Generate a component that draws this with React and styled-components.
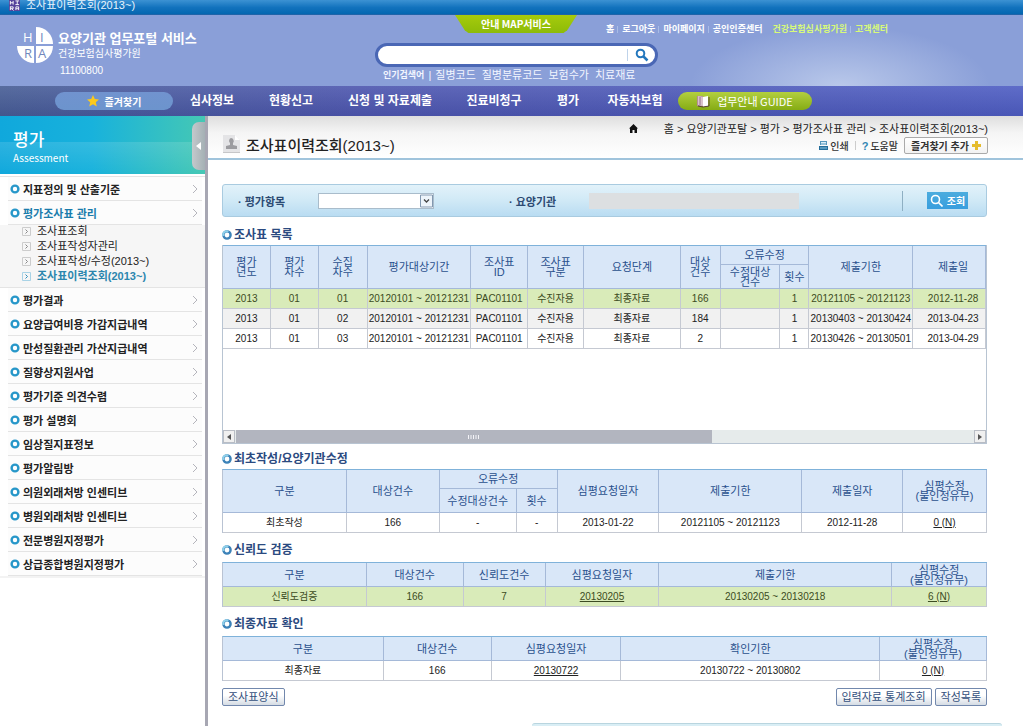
import React from "react";
import styled, { createGlobalStyle } from "styled-components";

const menuTop = ["지표정의 및 산출기준"];
const subMenu = ["조사표조회", "조사표작성자관리", "조사표작성/수정(2013~)", "조사표이력조회(2013~)"];
const menuRest = [
  "평가결과",
  "요양급여비용 가감지급내역",
  "만성질환관리 가산지급내역",
  "질향상지원사업",
  "평가기준 의견수렴",
  "평가 설명회",
  "임상질지표정보",
  "평가알림방",
  "의원외래처방 인센티브",
  "병원외래처방 인센티브",
  "전문병원지정평가",
  "상급종합병원지정평가"
];

const navItems = [
  { label: "심사정보", width: 78 },
  { label: "현황신고", width: 80 },
  { label: "신청 및 자료제출", width: 118 },
  { label: "진료비청구", width: 90 },
  { label: "평가", width: 58 },
  { label: "자동차보험", width: 76 }
];

const surveyRows = [
  ["2013", "01", "01", "20120101 ~ 20121231", "PAC01101", "수진자용", "최종자료", "166", "", "1", "20121105 ~ 20121123", "2012-11-28"],
  ["2013", "01", "02", "20120101 ~ 20121231", "PAC01101", "수진자용", "최종자료", "184", "", "1", "20130403 ~ 20130424", "2013-04-23"],
  ["2013", "01", "03", "20120101 ~ 20121231", "PAC01101", "수진자용", "최종자료", "2", "", "1", "20130426 ~ 20130501", "2013-04-29"]
];

const Columns = ({ widths }) => {
  const total = widths.reduce((sum, width) => sum + width, 0);
  return (
    <colgroup>
      { widths.map((width, i) => <Col key={ i } $share={ width / total * 100 } />) }
    </colgroup>
  );
};

const Ring = () => (
  <RingIcon viewBox="0 0 10 10">
    <circle cx="5" cy="5" r="3.4" fill="#fff" stroke="#2797c9" strokeWidth="2.4" />
  </RingIcon>
);

const Section = ({ children, space }) => (
  <SectionTitle $space={ space }>
    <RingIcon viewBox="0 0 10 10">
      <circle cx="5" cy="5" r="3.6" fill="#fff" stroke="#3c82b8" strokeWidth="2.4" />
      <path d="M1.4 6a3.6 3.6 0 0 1 5-4.4" fill="none" stroke="#8ed0ea" strokeWidth="2" />
    </RingIcon>
    { children }
  </SectionTitle>
);

const MenuEntry = ({ label, active }) => (
  <MenuLink href="#" $active={ active }>
    <Ring />
    <span>{ label }</span>
    <Chevron viewBox="0 0 6 10"><path d="M1 1l4 4-4 4" /></Chevron>
  </MenuLink>
);

const Logo = () => (
  <LogoMark viewBox="0 0 38 38">
    <path d="M20 18V1a17 17 0 0 1 17 17z" fill="#fff" />
    <path d="M18 20v17A17 17 0 0 1 1 20z" fill="#fff" />
    <path d="M20 20h17a17 17 0 0 1-17 17z" fill="#fff" />
    <text x="7" y="16" fill="#fff">H</text>
    <text x="24" y="16" fill="#7288bd">I</text>
    <text x="8" y="32" fill="#7288bd">R</text>
    <text x="22" y="32" fill="#7288bd">A</text>
  </LogoMark>
);

const App = () => (
  <Page>
    <GlobalStyle />
    <TitleBar>
      <Favicon viewBox="0 0 12 12">
        <rect width="12" height="12" fill="#54429a" />
        <path d="M1.5 1v4M4.5 1v4M1.5 3h3M7 1h4M9 1v4M7 5h4M1.5 7v4M1.5 7.5h3v2h-3M3 9.5l2 2M7.5 11V7.5h3V11M7.5 9.5h3" stroke="#fff" fill="none" />
      </Favicon>
      조사표이력조회(2013~)
    </TitleBar>
    <Header>
      <Brand>
        <Logo />
        <BrandText>
          <BrandName>요양기관 업무포털 서비스</BrandName>
          <BrandOrg>건강보험심사평가원</BrandOrg>
          <BrandCode>11100800</BrandCode>
        </BrandText>
      </Brand>
      <HeaderMain>
        <TopRow>
          <MapButton>안내 MAP서비스</MapButton>
          <TopLinks>
            <TopLink href="#">홈</TopLink>
            <TopLink href="#">로그아웃</TopLink>
            <TopLink href="#">마이페이지</TopLink>
            <TopLink href="#">공인인증센터</TopLink>
          </TopLinks>
          <TopLinks>
            <TopLink href="#" $green>건강보험심사평가원</TopLink>
            <TopLink href="#" $green>고객센터</TopLink>
          </TopLinks>
        </TopRow>
        <SearchBox>
          <SearchInput aria-label="통합검색" />
          <SearchButton aria-label="검색">
            <svg width="14" height="14" viewBox="0 0 14 14" fill="none" stroke="#2377bd" strokeWidth="2">
              <circle cx="5.5" cy="5.5" r="3.8" />
              <path d="M8.5 8.5l4 4" strokeWidth="2.5" />
            </svg>
          </SearchButton>
        </SearchBox>
        <Keywords>
          <b>인기검색어</b>
          <span>|</span>
          <a href="#">질병코드</a>
          <a href="#">질병분류코드</a>
          <a href="#">보험수가</a>
          <a href="#">치료재료</a>
        </Keywords>
      </HeaderMain>
    </Header>
    <Nav>
      <FavoriteButton>
        <svg width="12" height="12" viewBox="0 0 12 12">
          <path d="M6 0l1.8 4 4.2.4-3.2 2.8 1 4.4L6 9.3l-3.8 2.3 1-4.4L0 4.4 4.2 4z" fill="#fbc91c" />
        </svg>
        즐겨찾기
      </FavoriteButton>
      { navItems.map(item => <NavItem key={ item.label } href="#" $width={ item.width }>{ item.label }</NavItem>) }
      <GuideButton>
        <svg width="13" height="13" viewBox="0 0 13 13">
          <path d="M0 1h6v10H0z" fill="#b58c98" />
          <path d="M1 1l5 1v9l-5-1z" fill="#d9c3cb" />
          <path d="M6 2l5-1v10l-5 1z" fill="#fff" />
          <path d="M1 11l5 1 6-1V2" stroke="#583f38" fill="none" />
          <path d="M3 2v8" stroke="#96758c" />
        </svg>
        업무안내 GUIDE
      </GuideButton>
    </Nav>
    <Body>
      <Sidebar>
        <SideHead>
          <div>
            <SideTitle>평가</SideTitle>
            <SideSub>Assessment</SideSub>
          </div>
          <CollapseButton aria-label="메뉴 닫기">
            <svg width="5" height="8" viewBox="0 0 5 8"><path d="M5 0v8L0 4z" fill="#fff" /></svg>
          </CollapseButton>
        </SideHead>
        <Menu>
          { menuTop.map(label => <MenuEntry key={ label } label={ label } />) }
          <MenuEntry label="평가조사표 관리" active />
          <SubMenu>
            { subMenu.map((label, i) => (
              <SubLink key={ label } href="#" $active={ i === 3 }>
                <svg width="9" height="9" viewBox="0 0 9 9" fill="none">
                  <path d="M.5.5h8v8h-8z" stroke={ i === 3 ? "#a9d3e6" : "#ccc" } />
                  <path d="M3.5 2.5l2 2-2 2" stroke={ i === 3 ? "#2f8fbc" : "#888" } />
                </svg>
                { label }
              </SubLink>
            )) }
          </SubMenu>
          { menuRest.map(label => <MenuEntry key={ label } label={ label } />) }
        </Menu>
      </Sidebar>
      <Main>
        <PageHead>
          <PageTitle>
            <svg width="19" height="20" viewBox="0 0 19 20">
              <path d="M1 1h12l5 5v13H1z" fill="#e4e4e6" />
              <path d="M13 1v5h5z" fill="#fff" />
              <path d="M1 18.5h17" stroke="#c6c6c8" />
              <path d="M9 4a3 3 0 0 1 2 5v2l4 1v3H4v-3l4-1V9a3 3 0 0 1 1-5z" fill="#9c9ca0" />
            </svg>
            조사표이력조회(2013~)
          </PageTitle>
          <PageTools>
            <Crumbs>
              <svg width="9" height="9" viewBox="0 0 9 9"><path d="M4.5 0L9 4.5H8V9H5.5V6h-2v3H1V4.5H0z" fill="#111" /></svg>
              <span>홈 &gt; 요양기관포탈 &gt; 평가 &gt; 평가조사표 관리 &gt; 조사표이력조회(2013~)</span>
            </Crumbs>
            <ToolRow>
              <ToolLink href="#">
                <svg width="9" height="9" viewBox="0 0 9 9">
                  <path d="M1 0h7v4H1z" fill="#5596bc" />
                  <path d="M2 1.5h5M2 3h5" stroke="#d9edf8" />
                  <path d="M0 5h9v4H0z" fill="#246e9c" />
                  <path d="M1 7h7" stroke="#8ac5e3" />
                </svg>
                인쇄
              </ToolLink>
              <ToolDivider />
              <ToolLink href="#"><Question>?</Question>도움말</ToolLink>
              <AddFavorite>
                즐겨찾기 추가
                <svg width="9" height="9" viewBox="0 0 9 9"><path d="M3 0h3v3h3v3H6v3H3V6H0V3h3z" fill="#e5bc2d" /></svg>
              </AddFavorite>
            </ToolRow>
          </PageTools>
        </PageHead>
        <Content>
          <Filter>
            <FilterLabel htmlFor="item">· 평가항목</FilterLabel>
            <SelectWrap>
              <Select id="item"><option></option></Select>
              <SelectArrow viewBox="0 0 13 13">
                <path d="M.5.5h12v12H.5z" fill="#edf4fa" stroke="#8298b0" />
                <path d="M4 5l2.5 2.5L9 5" fill="none" stroke="#444" strokeWidth="1.3" />
              </SelectArrow>
            </SelectWrap>
            <FilterLabel htmlFor="org" $indent>· 요양기관</FilterLabel>
            <OrgInput id="org" disabled />
            <FilterDivider />
            <QueryButton>
              <svg width="13" height="13" viewBox="0 0 13 13" fill="none" stroke="#fff" strokeWidth="1.6">
                <circle cx="5.5" cy="5.5" r="4" />
                <path d="M8.5 8.5l4 4" />
              </svg>
              조회
            </QueryButton>
          </Filter>

          <Section space={ 8 }>조사표 목록</Section>
          <GridPanel>
            <Table $flush>
              <Columns widths={ [48, 48, 49, 104, 57, 56, 97, 40, 60, 29, 104, 73] } />
              <thead>
                <tr>
                  <Th rowSpan="2">평가<br />년도</Th>
                  <Th rowSpan="2">평가<br />차수</Th>
                  <Th rowSpan="2">수집<br />차수</Th>
                  <Th rowSpan="2">평가대상기간</Th>
                  <Th rowSpan="2">조사표<br />ID</Th>
                  <Th rowSpan="2">조사표<br />구분</Th>
                  <Th rowSpan="2">요청단계</Th>
                  <Th rowSpan="2">대상<br />건수</Th>
                  <Th colSpan="2" $height={ 19 }>오류수정</Th>
                  <Th rowSpan="2">제출기한</Th>
                  <Th rowSpan="2" $cut>제출일</Th>
                </tr>
                <tr>
                  <Th $height={ 24 }>수정대상<br />건수</Th>
                  <Th>횟수</Th>
                </tr>
              </thead>
              <tbody>
                { surveyRows.map((row, i) => (
                  <Row key={ i } $tone={ ["green", "grey"][i] }>
                    { row.map((cell, j) => <Td key={ j } $cut={ j === 11 }>{ cell }</Td>) }
                  </Row>
                )) }
              </tbody>
            </Table>
            <ScrollBar>
              <ScrollButton aria-label="왼쪽"><svg width="4" height="6" viewBox="0 0 4 6"><path d="M4 0v6L0 3z" fill="#555" /></svg></ScrollButton>
              <ScrollTrack>
                <ScrollThumb>
                  <svg width="12" height="4" viewBox="0 0 12 4"><path d="M.5 0v4M3 0v4M5.5 0v4M8 0v4M10.5 0v4" stroke="#f4f4f8" /></svg>
                </ScrollThumb>
              </ScrollTrack>
              <ScrollButton aria-label="오른쪽"><svg width="4" height="6" viewBox="0 0 4 6"><path d="M0 0v6l4-3z" fill="#555" /></svg></ScrollButton>
            </ScrollBar>
          </GridPanel>

          <Section space={ 5 }>최초작성/요양기관수정</Section>
          <Table>
            <Columns widths={ [124, 93, 77, 41, 102, 143, 101, 84] } />
            <thead>
              <tr>
                <Th rowSpan="2">구분</Th>
                <Th rowSpan="2">대상건수</Th>
                <Th colSpan="2" $height={ 19 }>오류수정</Th>
                <Th rowSpan="2">심평요청일자</Th>
                <Th rowSpan="2">제출기한</Th>
                <Th rowSpan="2">제출일자</Th>
                <Th rowSpan="2">심평수정<br />(불인정유무)</Th>
              </tr>
              <tr>
                <Th $height={ 24 }>수정대상건수</Th>
                <Th>횟수</Th>
              </tr>
            </thead>
            <tbody>
              <Row>
                <Td>최초작성</Td>
                <Td>166</Td>
                <Td>-</Td>
                <Td>-</Td>
                <Td>2013-01-22</Td>
                <Td>20121105 ~ 20121123</Td>
                <Td>2012-11-28</Td>
                <Td><a href="#">0 (N)</a></Td>
              </Row>
            </tbody>
          </Table>

          <Section space={ 7 }>신뢰도 검증</Section>
          <Table>
            <Columns widths={ [144, 97, 82, 114, 233, 95] } />
            <thead>
              <tr>
                <Th $height={ 24 }>구분</Th>
                <Th>대상건수</Th>
                <Th>신뢰도건수</Th>
                <Th>심평요청일자</Th>
                <Th>제출기한</Th>
                <Th>심평수정<br />(불인정유무)</Th>
              </tr>
            </thead>
            <tbody>
              <Row $tone="green">
                <Td>신뢰도검증</Td>
                <Td>166</Td>
                <Td>7</Td>
                <Td><DateLink href="#">20130205</DateLink></Td>
                <Td>20130205 ~ 20130218</Td>
                <Td><a href="#">6 (N)</a></Td>
              </Row>
            </tbody>
          </Table>

          <Section space={ 7 }>최종자료 확인</Section>
          <Table>
            <Columns widths={ [161, 108, 130, 259, 107] } />
            <thead>
              <tr>
                <Th $height={ 24 }>구분</Th>
                <Th>대상건수</Th>
                <Th>심평요청일자</Th>
                <Th>확인기한</Th>
                <Th>심평수정<br />(불인정유무)</Th>
              </tr>
            </thead>
            <tbody>
              <Row>
                <Td>최종자료</Td>
                <Td>166</Td>
                <Td><DateLink href="#">20130722</DateLink></Td>
                <Td>20130722 ~ 20130802</Td>
                <Td><a href="#">0 (N)</a></Td>
              </Row>
            </tbody>
          </Table>

          <Actions>
            <ActionButton>조사표양식</ActionButton>
            <ActionGroup>
              <ActionButton>입력자료 통계조회</ActionButton>
              <ActionButton>작성목록</ActionButton>
            </ActionGroup>
          </Actions>
        </Content>
        <FootStrip />
      </Main>
    </Body>
  </Page>
);

export default App;


const GlobalStyle = createGlobalStyle`
  * {
    box-sizing: border-box;
  }

  body {
    margin: 0;
    background: #fff;
  }

  body, button, input, select {
    font-family: "Liberation Sans", "Noto Sans CJK KR", sans-serif;
    font-size: 11px;
  }

  a {
    color: inherit;
  }

  button {
    padding: 0;
    border: 0;
    white-space: nowrap;
  }

  svg {
    flex: none;
  }
`;

const Page = styled.div`
  display: flex;
  flex-direction: column;
  min-height: 100vh;
`;

const TitleBar = styled.div`
  display: flex;
  align-items: center;
  gap: 6px;
  height: 15px;
  padding: 0 0 4px 9px;
  color: #e9f4fc;
  font-size: 11px;
  line-height: 11px;
  background: linear-gradient(#3c92d3, #1272bd 50%, #0567b1 90%, #2c62a4);
`;

const Favicon = styled.svg`
  width: 11px;
  height: 11px;
`;

const Header = styled.header`
  display: flex;
  height: 71px;
  background: radial-gradient(ellipse 150px 60px at 840px 100%, #b9c8ea, rgba(138, 159, 216, 0)), #8a9fd8;
`;

const Brand = styled.div`
  display: flex;
  flex: none;
  gap: 4px;
  width: 375px;
  padding: 11px 0 0 16px;
  color: #fff;
`;

const LogoMark = styled.svg`
  width: 38px;
  height: 38px;
  font-family: "Open Sans", sans-serif;
  font-size: 13px;
`;

const BrandText = styled.div`
  display: flex;
  flex-direction: column;
`;

const BrandName = styled.strong`
  padding-top: 4px;
  font-size: 13px;
  line-height: 18px;
`;

const BrandOrg = styled.span`
  font-size: 10px;
  line-height: 12px;
`;

const BrandCode = styled.span`
  margin-top: 4px;
  padding-left: 2px;
  font-size: 10px;
  line-height: 14px;
`;

const HeaderMain = styled.div`
  flex: 1;
`;

const TopRow = styled.div`
  display: flex;
  height: 28px;
  padding-left: 80px;
`;

const MapButton = styled.button`
  width: 122px;
  height: 18px;
  margin-right: 29px;
  color: #fff;
  font-family: "Noto Sans CJK KR", sans-serif;
  font-size: 10px;
  font-weight: bold;
  line-height: 18px;
  background: linear-gradient(#a6cb0c, #8dbb08);
  clip-path: polygon(0 0, 100% 0, 92% 85%, 89% 100%, 11% 100%, 8% 85%);
`;

const TopLinks = styled.div`
  display: flex;
  gap: 8px;
  height: 27px;
  margin-right: 10px;
  align-items: center;
`;

const TopLink = styled.a`
  position: relative;
  color: ${props => props.$green ? "#d8fa79" : "#fff"};
  font-size: 9px;
  font-weight: bold;
  line-height: 12px;
  text-decoration: none;
  white-space: nowrap;

  & + &::before {
    content: "";
    position: absolute;
    top: 3px;
    left: -5px;
    height: 7px;
    border-left: 1px solid #a9bce6;
  }
`;

const SearchBox = styled.div`
  display: flex;
  align-items: center;
  width: 283px;
  height: 24px;
  border: 3px solid #4a67b5;
  border-radius: 12px;
  background: #fff;
`;

const SearchInput = styled.input`
  flex: 1;
  min-width: 0;
  height: 14px;
  margin-left: 10px;
  border: 0;
  outline: 0;
  background: none;
`;

const SearchButton = styled.button`
  display: flex;
  align-items: center;
  justify-content: center;
  width: 28px;
  height: 12px;
  border-left: 1px solid #bfd3ea;
  background: none;
`;

const Keywords = styled.div`
  display: flex;
  gap: 6px;
  padding: 1px 0 0 8px;
  color: #f3f6ff;
  font-size: 11px;
  line-height: 14px;

  b {
    font-size: 9px;
  }

  span {
    margin: 0 -2px;
  }

  a {
    text-decoration: none;
  }
`;

const Nav = styled.nav`
  display: flex;
  align-items: center;
  height: 30px;
  padding-left: 55px;
  background: linear-gradient(rgba(255, 255, 255, 0.08), rgba(0, 0, 60, 0.1)), linear-gradient(90deg, #4a6097, #5059b0 35%, #5160c4);
`;

const FavoriteButton = styled.button`
  display: flex;
  align-items: center;
  justify-content: center;
  gap: 6px;
  width: 118px;
  height: 18px;
  border-radius: 9px;
  color: #fff;
  font-size: 10px;
  font-weight: bold;
  background: linear-gradient(#7193cf, #6c94cd);
`;

const NavItem = styled.a`
  width: ${props => props.$width}px;
  color: #fff;
  font-size: 12px;
  font-weight: bold;
  line-height: 18px;
  text-align: center;
  text-decoration: none;
  white-space: nowrap;
`;

const GuideButton = styled.button`
  display: flex;
  align-items: center;
  justify-content: center;
  gap: 7px;
  width: 134px;
  height: 18px;
  margin-left: 5px;
  border-radius: 9px;
  color: #fff;
  font-family: "Noto Sans CJK KR", sans-serif;
  font-size: 11px;
  line-height: 16px;
  background: linear-gradient(#b3cf3f, #85ac14);
`;

const Body = styled.div`
  display: flex;
  flex: 1;
`;

const Sidebar = styled.aside`
  flex: none;
  width: 208px;
  border-right: 3px solid #a7a7b3;
  background: #fff;
`;

const SideHead = styled.div`
  display: flex;
  justify-content: space-between;
  height: 58px;
  padding: 0 0 0 13px;
  color: #fff;
  background: linear-gradient(rgba(255, 255, 255, 0) 45%, rgba(255, 255, 255, 0.12) 45%, rgba(255, 255, 255, 0)), linear-gradient(90deg, #10a8dc, #18b2dc 45%, #45c8b4);
`;

const SideTitle = styled.div`
  padding-top: 15px;
  font-size: 17px;
  font-weight: 500;
  line-height: 20px;
`;

const SideSub = styled.div`
  font-family: "Noto Sans CJK KR", sans-serif;
  font-size: 10px;
  line-height: 14px;
`;

const CollapseButton = styled.button`
  display: flex;
  align-items: center;
  justify-content: center;
  width: 13px;
  height: 48px;
  margin-top: 6px;
  border-radius: 7px 0 0 7px;
  background: linear-gradient(90deg, #c4c9cc, #a4b0b4);
`;

const Menu = styled.div`
  margin-top: 2px;
  border-top: 1px solid #e4e4e4;
  border-bottom: 2px solid #f3f3f3;
`;

const MenuLink = styled.a`
  display: flex;
  align-items: center;
  gap: 3px;
  height: 24px;
  margin: 0 3px 0 8px;
  padding: 0 4px 0 2px;
  border-bottom: 1px solid #e4e4e4;
  color: ${props => props.$active ? "#1a7cac" : "#222"};
  font-size: 11px;
  font-weight: bold;
  text-decoration: none;
  background: #fcfcfc;

  span {
    flex: 1;
  }
`;

const RingIcon = styled.svg`
  width: 10px;
  height: 10px;
`;

const Chevron = styled.svg`
  width: 6px;
  height: 10px;
  fill: none;
  stroke: #b5b5bc;
`;

const SubMenu = styled.div`
  padding: 0 0 2px;
  border-bottom: 1px solid #e4e4e4;
  background: #f6f6f6;
`;

const SubLink = styled.a`
  display: flex;
  align-items: center;
  gap: 6px;
  height: 15px;
  padding: 0 0 2px 22px;
  color: ${props => props.$active ? "#2b86ae" : "#222"};
  font-size: 11px;
  font-weight: ${props => props.$active ? "bold" : "normal"};
  line-height: 13px;
  text-decoration: none;
`;

const Main = styled.main`
  display: flex;
  flex: 1;
  flex-direction: column;
  min-width: 0;
`;

const PageHead = styled.div`
  display: flex;
  justify-content: space-between;
  height: 44px;
  padding: 0 35px 0 14px;
  border-bottom: 2px solid #a0c4dc;
  background: linear-gradient(#dedede, #f5f5f5 40%, #fff);
`;

const PageTitle = styled.h1`
  display: flex;
  align-items: center;
  gap: 5px;
  margin: 0;
  padding-top: 14px;
  color: #222;
  font-size: 15px;
  font-weight: 500;
`;

const PageTools = styled.div`
  display: flex;
  flex-direction: column;
  align-items: flex-end;
`;

const Crumbs = styled.div`
  display: flex;
  align-items: center;
  gap: 26px;
  height: 21px;
  padding-top: 3px;
  color: #222;
  font-size: 11px;
`;

const ToolRow = styled.div`
  display: flex;
  align-items: center;
  gap: 6px;
  height: 17px;
`;

const ToolLink = styled.a`
  display: flex;
  align-items: center;
  gap: 2px;
  color: #333;
  font-size: 10px;
  font-weight: 500;
  text-decoration: none;
`;

const ToolDivider = styled.div`
  height: 9px;
  border-left: 1px solid #ccc;
`;

const Question = styled.b`
  color: #3286b4;
  font-family: "Liberation Sans", sans-serif;
  font-size: 11px;
`;

const AddFavorite = styled.button`
  display: flex;
  align-items: center;
  justify-content: center;
  gap: 3px;
  width: 84px;
  height: 17px;
  border: 1px solid #aaa;
  border-radius: 2px;
  color: #333;
  font-size: 10px;
  font-weight: bold;
  background: linear-gradient(#fff, #f2f2f2);
`;

const Content = styled.div`
  padding: 24px 36px 0 14px;
`;

const Filter = styled.div`
  display: flex;
  align-items: center;
  height: 33px;
  padding: 0 18px 0 15px;
  border: 1px solid #a9cbe0;
  border-radius: 3px;
  background: linear-gradient(#e2f2fa, #d0e9f6 50%, #b9dcf2);
`;

const FilterLabel = styled.label`
  flex: none;
  width: 80px;
  margin-left: ${props => props.$indent ? "75px" : 0};
  color: #2c4a73;
  font-size: 11px;
  font-weight: bold;
`;

const SelectWrap = styled.div`
  position: relative;
  flex: none;
  width: 116px;
  height: 16px;
`;

const Select = styled.select`
  display: block;
  width: 100%;
  height: 100%;
  border: 1px solid #a9bccb;
  border-radius: 0;
  background: #fff;
  appearance: none;
`;

const SelectArrow = styled.svg`
  position: absolute;
  top: 1px;
  right: 1px;
  width: 13px;
  height: 14px;
  pointer-events: none;
`;

const OrgInput = styled.input`
  width: 210px;
  height: 16px;
  padding: 0;
  border: 0;
  background: #dcdfe1;
`;

const FilterDivider = styled.div`
  height: 20px;
  margin: 0 24px 0 auto;
  border-left: 1px solid #8eafc3;
`;

const QueryButton = styled.button`
  display: flex;
  align-items: center;
  justify-content: center;
  gap: 4px;
  width: 41px;
  height: 17px;
  color: #fff;
  font-size: 10px;
  font-weight: bold;
  background: linear-gradient(#4cacde, #389ede);
`;

const SectionTitle = styled.h2`
  display: flex;
  align-items: center;
  gap: 2px;
  height: 20px;
  margin: ${props => props.$space}px 0 0;
  color: #2b4a80;
  font-size: 12px;
  font-weight: bold;
  line-height: 18px;

  table + & {
    margin-bottom: 2px;
  }
`;

const GridPanel = styled.div`
  display: flex;
  flex-direction: column;
  min-height: 199px;
  border: 1px solid #b8c4d2;
  border-top: 0;
`;

const Table = styled.table`
  width: 100%;
  border-top: 1px solid #7fb2da;
  border-left: ${props => props.$flush ? "0" : "1px solid #b9c3d3"};
  border-spacing: 0;
  table-layout: fixed;
`;

const Col = styled.col`
  width: ${props => props.$share}%;
`;

const Td = styled.td`
  height: 20px;
  padding: ${props => props.$cut ? "0 0 0 8px" : 0};
  border-right: 1px solid #c5c9d2;
  border-bottom: 1px solid #c5c9d2;
  font-size: 10px;
  line-height: 12px;
  text-align: center;
  white-space: nowrap;
`;

const Th = styled(Td).attrs({ as: "th" })`
  height: ${props => props.$height ? props.$height + "px" : "auto"};
  border-color: #a5b9d8;
  color: #29508d;
  font-size: 11px;
  font-weight: normal;
  line-height: 10px;
  background: #d9e7f8;
`;

const DateLink = styled.a`
  font-size: 10px;
`;

const tones = {
  green: { background: "#d9ebb9", color: "#3c4c22" },
  grey: { background: "#f1f1f1", color: "#222" }
};

const Row = styled.tr`
  color: ${props => props.$tone ? tones[props.$tone].color : "#222"};
  background: ${props => props.$tone ? tones[props.$tone].background : "#fff"};
`;

const ScrollBar = styled.div`
  display: flex;
  height: 13px;
  margin-top: auto;
`;

const ScrollButton = styled.button`
  display: flex;
  align-items: center;
  justify-content: center;
  width: 12px;
  border: 1px solid #b9bdc5;
  background: #f0f0f0;
`;

const ScrollTrack = styled.div`
  flex: 1;
  padding-left: 1px;
  background: #e6ebeb;
`;

const ScrollThumb = styled.div`
  display: flex;
  align-items: center;
  justify-content: center;
  width: 64.5%;
  height: 100%;
  background: #b2b5bf;
`;

const Actions = styled.div`
  display: flex;
  justify-content: space-between;
  margin-top: 7px;
`;

const ActionGroup = styled.div`
  display: flex;
  gap: 3px;
`;

const ActionButton = styled.button`
  height: 18px;
  padding: 0 5px;
  border: 1px solid #7288ad;
  border-radius: 2px;
  color: #34507c;
  font-size: 11px;
  line-height: 14px;
  background: linear-gradient(#fff 40%, #d5dce4);
`;

const FootStrip = styled.div`
  height: 3px;
  margin: auto 21px 0 324px;
  border-top: 1px solid #b9d5df;
  border-radius: 3px 3px 0 0;
  background: #d9eef5;
`;
